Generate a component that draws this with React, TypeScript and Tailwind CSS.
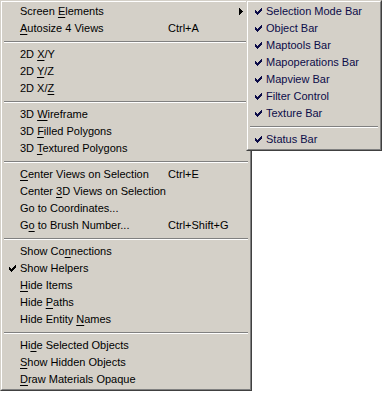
type Item =
  | { sep: true }
  | { sep?: false; label: string; u?: number; shortcut?: string; checked?: boolean; sub?: boolean };

const mainItems: Item[] = [
  { label: 'Screen Elements', u: 7, sub: true },
  { label: 'Autosize 4 Views', u: 0, shortcut: 'Ctrl+A' },
  { sep: true },
  { label: '2D X/Y', u: 3 },
  { label: '2D Y/Z', u: 3 },
  { label: '2D X/Z', u: 5 },
  { sep: true },
  { label: '3D Wireframe', u: 3 },
  { label: '3D Filled Polygons', u: 3 },
  { label: '3D Textured Polygons', u: 3 },
  { sep: true },
  { label: 'Center Views on Selection', u: 0, shortcut: 'Ctrl+E' },
  { label: 'Center 3D Views on Selection', u: 7 },
  { label: 'Go to Coordinates...' },
  { label: 'Go to Brush Number...', u: 1, shortcut: 'Ctrl+Shift+G' },
  { sep: true },
  { label: 'Show Connections', u: 7 },
  { label: 'Show Helpers', checked: true },
  { label: 'Hide Items', u: 0 },
  { label: 'Hide Paths', u: 5 },
  { label: 'Hide Entity Names', u: 12 },
  { sep: true },
  { label: 'Hide Selected Objects', u: 2 },
  { label: 'Show Hidden Objects', u: 0 },
  { label: 'Draw Materials Opaque', u: 0 },
];

const subItems: Item[] = [
  { label: 'Selection Mode Bar', checked: true },
  { label: 'Object Bar', checked: true },
  { label: 'Maptools Bar', checked: true },
  { label: 'Mapoperations Bar', checked: true },
  { label: 'Mapview Bar', checked: true },
  { label: 'Filter Control', checked: true },
  { label: 'Texture Bar', checked: true },
  { sep: true },
  { label: 'Status Bar', checked: true },
];

const Check = () => (
  <svg width="7" height="7" viewBox="0 0 7 7" shapeRendering="crispEdges" fill="currentColor">
    <rect x="6" y="0" width="1" height="3" />
    <rect x="5" y="1" width="1" height="3" />
    <rect x="4" y="2" width="1" height="3" />
    <rect x="3" y="3" width="1" height="3" />
    <rect x="2" y="4" width="1" height="3" />
    <rect x="1" y="3" width="1" height="3" />
    <rect x="0" y="2" width="1" height="3" />
  </svg>
);

const Label = ({ text, u }: { text: string; u?: number }) => {
  if (u === undefined) return <span>{text}</span>;
  return (
    <span>
      {text.slice(0, u)}
      <span className="underline underline-offset-[2px]">{text[u]}</span>
      {text.slice(u + 1)}
    </span>
  );
};

const Menu = ({ items, shortcutCol }: { items: Item[]; shortcutCol?: boolean }) => (
  <div className="flex flex-col py-px">
    {items.map((it, i) =>
      it.sep ? (
        <div key={i} className="h-[9px] flex flex-col justify-center px-px">
          <div className="h-px bg-[#808080]" />
          <div className="h-px bg-white" />
        </div>
      ) : (
        <div key={i} className="relative h-[17px] flex items-center whitespace-nowrap">
          <div className="w-[17px] flex items-center justify-center pl-px">{it.checked && <Check />}</div>
          <div className={shortcutCol ? 'w-[148px]' : ''}>
            <Label text={it.label} u={it.u} />
          </div>
          {it.shortcut && <div>{it.shortcut}</div>}
          {it.sub && (
            <svg className="absolute right-[6px] top-[5px]" width="4" height="7" viewBox="0 0 4 7" shapeRendering="crispEdges">
              <path d="M0 0h1v7h-1zM1 1h1v5h-1zM2 2h1v3h-1zM3 3h1v1h-1z" fill="#000" />
            </svg>
          )}
        </div>
      )
    )}
  </div>
);

export default function App() {
  return (
    <div className="relative w-[382px] h-[395px] bg-white text-[11px] text-black" style={{ fontFamily: '"Liberation Sans", Arial, sans-serif' }}>
      <div className="w-[252px] h-[391px] bg-[#d4d0c8] border border-t-[#d4d0c8] border-l-[#d4d0c8] border-r-[#404040] border-b-[#404040]">
        <div className="h-full border border-t-white border-l-white border-r-[#808080] border-b-[#808080] px-px">
          <Menu items={mainItems} shortcutCol />
        </div>
      </div>

      {/* submenu */}
      <div className="absolute left-[246px] top-0 w-[136px] h-[151px] bg-[#d4d0c8] text-[#0c0c48] border border-t-[#d4d0c8] border-l-[#d4d0c8] border-r-[#404040] border-b-[#404040]">
        <div className="h-full border border-t-white border-l-white border-r-[#808080] border-b-[#808080] px-px">
          <Menu items={subItems} />
        </div>
      </div>
    </div>
  );
}
